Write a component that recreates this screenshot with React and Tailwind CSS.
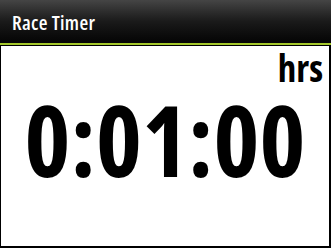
import React from 'react';

const cond = { fontFamily: '"Open Sans", "Liberation Sans", sans-serif' };

export default function App() {
  return (
    <div className="w-[331px] h-[248px] flex flex-col bg-black overflow-hidden" style={cond}>
      <div className="h-[43px] shrink-0 bg-gradient-to-b from-[#454545] via-[#1a1a1a] to-[#050505] flex items-center pl-[12px] pt-[2px]">
        <span className="text-white text-[20px] font-semibold leading-none tracking-[0.3px] font-stretch-semi-condensed">Race Timer</span>
      </div>
      <div className="h-[2px] shrink-0 bg-[#a3c72a]" />
      <div className="flex-1 mt-[1px] ml-[1px] mr-[2px] mb-[2px] bg-white flex flex-col pt-[8px]">
        <div className="flex justify-end pr-[6px]">
          <span className="text-black text-[37px] font-bold leading-[28px] font-stretch-condensed">hrs</span>
        </div>
        <div className="flex justify-center mt-[21px]">
          <span className="text-black text-[98px] font-bold leading-[72px] font-stretch-condensed">0:01:00</span>
        </div>
      </div>
    </div>
  );
}
